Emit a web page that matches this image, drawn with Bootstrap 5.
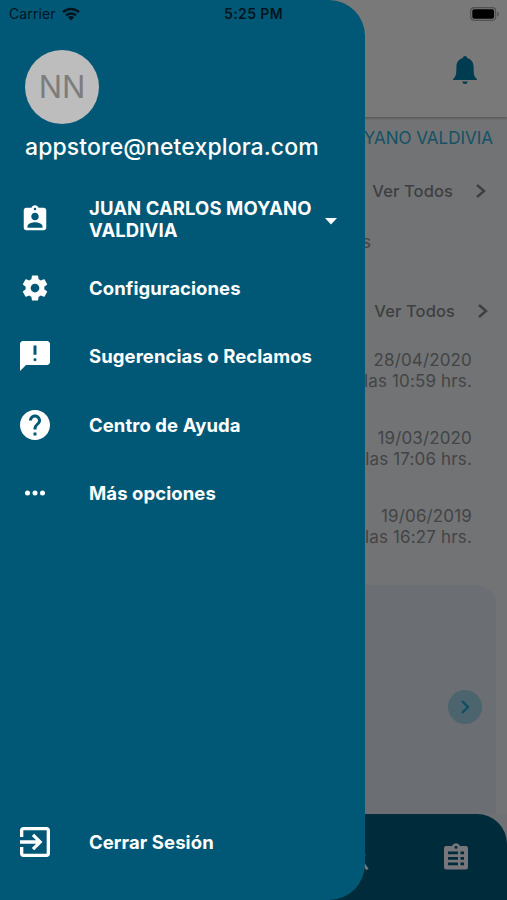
<!DOCTYPE html>
<html lang="es">
<head>
<meta charset="utf-8">
<meta name="viewport" content="width=device-width, initial-scale=1">
<title>Menú</title>
<link href="https://cdn.jsdelivr.net/npm/bootstrap@5.3.0/dist/css/bootstrap.min.css" rel="stylesheet">
<style>
  body { font-family: Inter, "Liberation Sans", sans-serif; background: #727375; }
  .screen { width: 507px; height: 900px; background: #727375; color: #434446; }
  .screen svg { display: block; flex: none; }
  .top-header { height: 117px; background: #797979; box-shadow: 0 1px 3px rgba(0,0,0,.3); padding: 23px 27px 0 0; color: #003c50; }
  .user-name { height: 44px; padding-right: 14px; font-size: 17px; color: #155164; }
  .see-all { height: 60px; font-size: 16.5px; font-weight: 500; letter-spacing: .1px; color: #3e3f41; }
  .see-all svg { margin-left: 22px; }
  .see-first { padding-right: 20px; }
  .see-second { padding-right: 18px; }
  .count-line { height: 60px; width: 371px; font-size: 17px; padding-top: 9px; }
  .visit { height: 78px; line-height: 21px; font-size: 17px; letter-spacing: .15px; text-align: right; padding: 9px 35px 0 0; }
  .promo { height: 229px; margin: 10px 11px 0 0; background: #6b6f73; border-radius: 0 20px 0 0; padding: 105px 14px 0 0; }
  .promo-wrap { background: #6f7174; }
  .go-btn { width: 34px; height: 34px; background: #4b646e; color: #0b4e64; }
  .bottom-bar { height: 86px; background: #002b3a; border-radius: 0 30px 0 0; color: #77767a; padding-right: 36px; }
  .search-icon { margin-right: 72px; }
  .drawer { width: 365px; height: 900px; background: #005876; border-radius: 0 36px 36px 0; color: #fff; }
  .avatar { width: 74px; height: 74px; margin: 49.5px 0 0 25px; background: #bdbdbd; color: #7d7d7d; font-size: 31px; font-weight: 400; padding-top: 1px; }
  .mail { margin: 7px 0 0 25px; height: 32px; line-height: 32px; font-size: 23px; letter-spacing: .12px; font-weight: 500; }
  .menu-rows { margin-top: 22.5px; }
  .menu-row { height: 68.5px; font-size: 18.5px; font-weight: 700; line-height: 22px; letter-spacing: .08px; }
  .icon-cell { width: 40px; margin: 0 34px 0 15px; }
  .menu-text { width: 236px; }
  .log-out { margin-bottom: 24px; }
  .status { height: 27px; font-size: 14px; letter-spacing: .1px; color: #00161e; padding: 0 7px 0 9px; }
  .status-clock { font-weight: 600; left: 224px; top: 4px; line-height: 20px; letter-spacing: .4px; }
  .wifi { margin-left: 6px; }
</style>
<script src="https://cdn.jsdelivr.net/npm/bootstrap@5.3.0/dist/js/bootstrap.bundle.min.js"></script>
</head>
<body class="m-0">
<div class="screen position-relative overflow-hidden">
  <main class="d-flex flex-column h-100">
    <header class="top-header d-flex justify-content-end align-items-center position-relative">
      <svg width="30" height="30" viewBox="0 0 30 30" fill="currentColor"><path d="M15 1c1.300 0 2 .9 2 2.100 4.500 1.200 6.600 4.500 6.600 9.300 0 6.300.4 9.100 3.200 11.400v1.100H3.200v-1.100C6 21.500 6.400 18.700 6.400 12.400c0-4.800 2.100-8.100 6.600-9.300C13 1.900 13.700 1 15 1z"/><path d="M12.200 26.400h5.600c-.4 1.700-1.400 2.500-2.800 2.500s-2.400-.8-2.800-2.500z"/></svg>
    </header>
    <div class="user-name d-flex justify-content-end align-items-center text-nowrap"><span>YANO VALDIVIA</span></div>
    <div class="see-all see-first d-flex justify-content-end align-items-center">
      <span>Ver Todos</span>
      <svg width="12" height="16" viewBox="0 0 12 16" fill="none" stroke="currentColor" stroke-width="2.400"><path d="M2 2l7 6-7 6"/></svg>
    </div>
    <div class="count-line text-end"><span>s</span></div>
    <div class="see-all see-second d-flex justify-content-end align-items-center">
      <span>Ver Todos</span>
      <svg width="12" height="16" viewBox="0 0 12 16" fill="none" stroke="currentColor" stroke-width="2.400"><path d="M2 2l7 6-7 6"/></svg>
    </div>
    <div class="visit"><div>28/04/2020</div><div>las 10:59 hrs.</div></div>
    <div class="visit"><div>19/03/2020</div><div>las 17:06 hrs.</div></div>
    <div class="visit"><div>19/06/2019</div><div>las 16:27 hrs.</div></div>
    <section class="promo d-flex justify-content-end align-items-start">
      <div class="go-btn rounded-circle d-flex align-items-center justify-content-center">
        <svg width="10" height="16" viewBox="0 0 10 16" fill="none" stroke="currentColor" stroke-width="2.200"><path d="M2 2l6 6-6 6"/></svg>
      </div>
    </section>
    <div class="promo-wrap">
      <nav class="bottom-bar d-flex justify-content-end align-items-center">
        <svg class="search-icon" width="24" height="28" viewBox="0 0 24 28" fill="none" stroke="currentColor" stroke-width="2.800"><circle cx="11" cy="12" r="8"/><path d="M16.500 18l6 8.500"/></svg>
        <svg width="30" height="30" viewBox="0 0 30 30"><path fill="currentColor" fill-rule="evenodd" d="M5 4h6.200a4 4 0 0 1 7.600 0H25a2 2 0 0 1 2 2v19.500a2 2 0 0 1-2 2H5a2 2 0 0 1-2-2V6a2 2 0 0 1 2-2zM15 3.800a1.500 1.500 0 1 0 0 3 1.500 1.500 0 0 0 0-3zM7 9.500v2.800h10V9.500zm12.500 0v2.800H23V9.500zM7 15v2.800h10V15zm12.500 0v2.800H23V15zM7 20.500v2.800h10v-2.800zm12.500 0v2.800H23v-2.800z"/></svg>
      </nav>
    </div>
  </main>

  <aside class="drawer position-absolute top-0 start-0 d-flex flex-column">
    <div class="avatar rounded-circle d-flex align-items-center justify-content-center"><span>NN</span></div>
    <div class="mail text-nowrap"><span>appstore@netexplora.com</span></div>
    <div class="menu-rows">
      <div class="menu-row d-flex align-items-center">
        <div class="icon-cell d-flex justify-content-center"><svg width="30" height="30" viewBox="0 0 24 24" fill="currentColor"><path d="M19 3h-4.180C14.400 1.840 13.300 1 12 1c-1.300 0-2.400.84-2.820 2H5c-1.100 0-2 .9-2 2v14c0 1.100.9 2 2 2h14c1.100 0 2-.9 2-2V5c0-1.100-.9-2-2-2zm-7 0c.55 0 1 .45 1 1s-.45 1-1 1-1-.45-1-1 .45-1 1-1zm0 4c1.660 0 3 1.340 3 3s-1.340 3-3 3-3-1.340-3-3 1.340-3 3-3zm6 12H6v-1.400c0-2 4-3.100 6-3.100s6 1.100 6 3.100V19z"/></svg></div>
        <div class="menu-text"><span>JUAN CARLOS MOYANO VALDIVIA</span></div>
        <svg class="mt-1" width="12" height="7" viewBox="0 0 12 7" fill="currentColor"><path d="M0 0h12L6 6.500z"/></svg>
      </div>
      <div class="menu-row d-flex align-items-center">
        <div class="icon-cell d-flex justify-content-center"><svg width="30" height="30" viewBox="0 0 24 24" fill="currentColor"><path d="M19.430 12.980c.04-.32.070-.64.070-.98s-.03-.66-.07-.98l2.110-1.650c.19-.15.24-.42.120-.64l-2-3.460c-.12-.22-.39-.3-.61-.22l-2.490 1c-.52-.4-1.080-.73-1.690-.98l-.38-2.650C14.460 2.180 14.250 2 14 2h-4c-.25 0-.46.18-.49.42l-.38 2.650c-.61.25-1.170.59-1.690.98l-2.490-1c-.23-.09-.49 0-.61.22l-2 3.460c-.13.22-.07.49.12.64l2.110 1.650c-.04.32-.07.65-.07.98s.03.66.07.98l-2.110 1.650c-.19.15-.24.42-.12.64l2 3.460c.12.22.39.3.61.22l2.490-1c.52.4 1.080.73 1.690.98l.38 2.650c.03.24.24.42.49.42h4c.25 0 .46-.18.49-.42l.38-2.650c.61-.25 1.170-.59 1.690-.98l2.490 1c.23.09.49 0 .61-.22l2-3.460c.12-.22.07-.49-.12-.64l-2.110-1.650zM12 15.500c-1.930 0-3.500-1.570-3.500-3.500s1.570-3.500 3.500-3.500 3.500 1.570 3.500 3.500-1.570 3.500-3.500 3.500z"/></svg></div>
        <span>Configuraciones</span>
      </div>
      <div class="menu-row d-flex align-items-center">
        <div class="icon-cell d-flex justify-content-center"><svg width="36" height="36" viewBox="0 0 24 24" fill="currentColor"><path d="M20 2H4c-1.100 0-1.990.9-1.990 2L2 22l4-4h14c1.100 0 2-.9 2-2V4c0-1.100-.9-2-2-2zm-7 12.500c0 1.300-2 1.300-2 0s2-1.300 2 0zm0-3.300h-2V5h2v6.200z"/></svg></div>
        <span>Sugerencias o Reclamos</span>
      </div>
      <div class="menu-row d-flex align-items-center">
        <div class="icon-cell d-flex justify-content-center"><svg width="36" height="36" viewBox="0 0 24 24" fill="currentColor"><path d="M12 2C6.480 2 2 6.480 2 12s4.480 10 10 10 10-4.480 10-10S17.520 2 12 2zm1 17h-2v-2h2v2zm2.070-7.750l-.9.920C13.450 12.900 13 13.500 13 15h-2v-.5c0-1.100.45-2.100 1.170-2.830l1.240-1.260c.37-.36.59-.86.59-1.410 0-1.100-.9-2-2-2s-2 .9-2 2H8c0-2.210 1.790-4 4-4s4 1.790 4 4c0 .88-.36 1.680-.93 2.250z"/></svg></div>
        <span>Centro de Ayuda</span>
      </div>
      <div class="menu-row d-flex align-items-center">
        <div class="icon-cell d-flex justify-content-center"><svg width="30" height="30" viewBox="0 0 24 24" fill="currentColor"><circle cx="6" cy="12" r="2"/><circle cx="12" cy="12" r="2"/><circle cx="18" cy="12" r="2"/></svg></div>
        <span>Más opciones</span>
      </div>
    </div>
    <div class="menu-row log-out d-flex align-items-center mt-auto">
      <div class="icon-cell d-flex justify-content-center"><svg width="40" height="40" viewBox="0 0 24 24" fill="currentColor"><path d="M10.090 15.590L11.500 17l5-5-5-5-1.410 1.410L12.670 11H3v2h9.670l-2.580 2.590zM19 3H5c-1.110 0-2 .9-2 2v4h2V5h14v14H5v-4H3v4c0 1.100.89 2 2 2h14c1.100 0 2-.9 2-2V5c0-1.100-.9-2-2-2z"/></svg></div>
      <span>Cerrar Sesión</span>
    </div>
  </aside>

  <div class="status position-absolute top-0 start-0 w-100 d-flex align-items-center">
    <span>Carrier</span>
    <svg class="wifi" width="18" height="14" viewBox="0 0 18 14" fill="none" stroke="currentColor" stroke-width="2.500"><path d="M1 5.200a11.500 11.500 0 0 1 16 0M4 8.400a7.200 7.200 0 0 1 10 0"/><path fill="currentColor" stroke="none" d="M5.800 10.200a4.600 4.600 0 0 1 6.400 0L9 13.500z"/></svg>
    <span class="status-clock position-absolute">5:25 PM</span>
    <svg class="ms-auto" width="30" height="14" viewBox="0 0 30 14"><rect x=".7" y=".7" width="25" height="12.600" rx="3.500" fill="none" stroke="#515151" stroke-width="1.200"/><rect x="2.300" y="2.300" width="21.800" height="9.400" rx="2" fill="#000"/><path d="M27.300 4.700c2.200.7 2.200 3.900 0 4.600z" fill="#515151"/></svg>
  </div>
</div>
</body>
</html>
